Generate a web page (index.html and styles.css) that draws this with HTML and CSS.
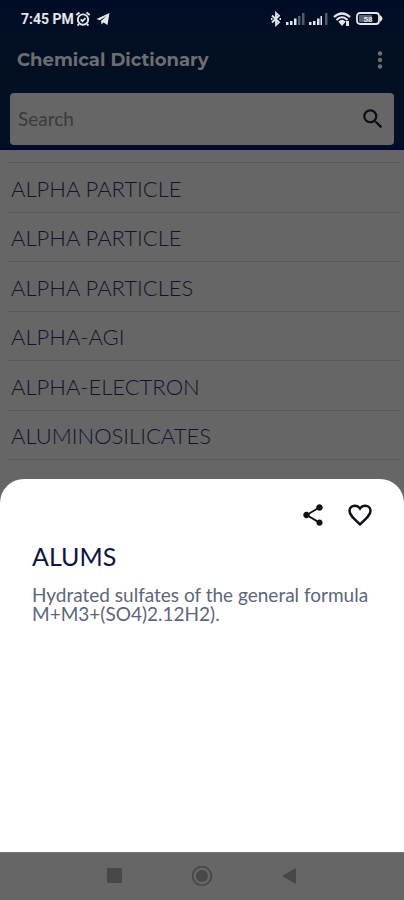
FILE: index.html
```html
<!DOCTYPE html>
<html lang="en">
<head>
<meta charset="utf-8">
<meta name="viewport" content="width=device-width, initial-scale=1">
<title>Chemical Dictionary</title>
<link rel="stylesheet" href="styles.css">
</head>
<body>
<div class="app">
  <header class="header">
    <div class="status">
      <div class="status-left">
        <span>7:45 PM</span>
        <svg width="16" height="16" viewBox="0 0 16 16" fill="none" stroke="currentColor" stroke-width="1.9" aria-hidden="true"><circle cx="8" cy="8.6" r="5.2"/><path d="M1.3 4 4.5 1.5M14.7 4l-3.2-2.500M3.900 13l-1.300 1.700M12.100 13l1.300 1.700M5.700 8.400l1.800 1.800 3-3"/></svg>
        <svg class="plane" width="14" height="14" viewBox="0 0 14 14" fill="currentColor" aria-hidden="true"><path d="M.5 7 13.500 1 11.500 13 7.500 10.500 5.500 12.500 5 9 10.500 4 3.800 8.300z"/></svg>
      </div>
      <div class="status-right">
        <svg width="12" height="16" viewBox="0 0 12 16" fill="none" stroke="currentColor" stroke-width="1.800" aria-hidden="true"><path d="M2 4.500 9 11.300 6 14V2l3 2.700L2 11.500M1 8h1.500M9.500 8H11"/></svg>
        <svg width="19" height="14" viewBox="0 0 19 14" fill="currentColor" aria-hidden="true"><path d="M0 10h2.500v3H0zM4 9h2.500v4H4zM8 6.500h2.500V13H8z"/><path opacity=".35" d="M12 4h2.500v9H12zM16 1h2.500v12H16z"/></svg>
        <svg width="19" height="14" viewBox="0 0 19 14" fill="currentColor" aria-hidden="true"><path d="M0 10h2.500v3H0zM4 9h2.500v4H4zM8 6.500h2.500V13H8z"/><path opacity=".35" d="M16 1h2.500v12H16z"/><path d="M11.500 4H13v9h-1.500z"/></svg>
        <svg width="20" height="16" viewBox="0 0 20 16" fill="none" stroke="currentColor" stroke-width="2.200" aria-hidden="true"><path d="M2 6Q10-1 18 6M4.500 9Q10 3.500 15.500 9M7 11.500q3-3 6 0"/><path fill="currentColor" stroke="none" d="m7.500 12 2.500-1.500L12.500 12 10 15zM14 10h3v5h-3z"/></svg>
        <svg class="battery" width="27" height="14" viewBox="0 0 27 14" aria-hidden="true"><rect x="1" y="1" width="22" height="11" rx="3" fill="none" stroke="currentColor" stroke-width="1.800"/><path d="M24 3q5 3.500 0 7z" fill="currentColor"/><rect x="3" y="3" width="13" height="7" rx="1" fill="currentColor" opacity=".4"/><text x="12" y="10" text-anchor="middle">58</text></svg>
      </div>
    </div>
    <div class="toolbar">
      <h1 class="title">Chemical Dictionary</h1>
      <button class="icon-button menu" aria-label="More options"><svg width="6" height="20" viewBox="0 0 6 20" fill="currentColor"><circle cx="3" cy="3.500" r="2.200"/><circle cx="3" cy="10" r="2.200"/><circle cx="3" cy="16.500" r="2.200"/></svg></button>
    </div>
    <form class="search">
      <input type="search" placeholder="Search" aria-label="Search">
      <button type="button" class="icon-button" aria-label="Find"><svg width="26" height="26" viewBox="0 0 24 24" fill="currentColor"><path d="M15.500 14h-.79l-.28-.27A6.470 6.470 0 0 0 16 9.500 6.500 6.500 0 1 0 9.500 16c1.610 0 3.090-.59 4.230-1.570l.27.28v.79l5 4.990L20.490 19zm-6 0C7.010 14 5 11.990 5 9.500S7.010 5 9.500 5 14 7.010 14 9.500 11.990 14 9.500 14z"/></svg></button>
    </form>
  </header>
  <main class="content">
    <ul class="terms">
      <li>ALPHA PARTICLE</li>
      <li>ALPHA PARTICLE</li>
      <li>ALPHA PARTICLES</li>
      <li>ALPHA-AGI</li>
      <li>ALPHA-ELECTRON</li>
      <li>ALUMINOSILICATES</li>
    </ul>
  </main>
  <section class="sheet" role="dialog" aria-labelledby="term">
    <div class="actions">
      <button class="icon-button" aria-label="Share"><svg width="26" height="26" viewBox="0 0 24 24" fill="currentColor"><path d="M18 16.080c-.76 0-1.440.3-1.960.77L8.910 12.700c.05-.23.09-.46.09-.7s-.04-.47-.09-.7l7.050-4.110c.54.5 1.250.81 2.040.81 1.660 0 3-1.340 3-3s-1.340-3-3-3-3 1.340-3 3c0 .24.04.47.09.7L8.040 9.810C7.500 9.310 6.790 9 6 9c-1.660 0-3 1.340-3 3s1.340 3 3 3c.79 0 1.500-.31 2.040-.81l7.120 4.160c-.05.21-.08.43-.08.65 0 1.610 1.310 2.920 2.920 2.920s2.920-1.310 2.920-2.920-1.310-2.920-2.920-2.920z"/></svg></button>
      <button class="icon-button" aria-label="Add to favourites"><svg width="28" height="28" viewBox="0 0 24 24" fill="none" stroke="currentColor" stroke-width="2.100"><path d="M12 20C6 14.600 3 11.800 3 8.500 3 5.900 5 4 7.500 4 9.300 4 11 4.900 12 6.400 13 4.900 14.700 4 16.500 4 19 4 21 5.900 21 8.500c0 3.300-3 6.100-9 11.500z"/></svg></button>
    </div>
    <h2 class="term" id="term">ALUMS</h2>
    <p class="definition">Hydrated sulfates of the general formula M+M3+(SO4)2.12H2).</p>
  </section>
  <nav class="navbar" aria-label="System">
    <button class="icon-button" aria-label="Recent apps"><svg width="22" height="22" viewBox="0 0 22 22" fill="currentColor"><rect x="4" y="2" width="15" height="15" rx="1"/></svg></button>
    <button class="icon-button" aria-label="Home"><svg width="22" height="22" viewBox="0 0 22 22" fill="currentColor"><circle cx="11" cy="10" r="9.300" fill="none" stroke="currentColor" stroke-width="1.800"/><circle cx="11" cy="10" r="6"/></svg></button>
    <button class="icon-button" aria-label="Back"><svg width="22" height="22" viewBox="0 0 22 22" fill="currentColor"><path d="M3 10 17 2v16z"/></svg></button>
  </nav>
</div>
</body>
</html>
```
FILE: styles.css
```css
* {
  box-sizing: border-box;
}

body {
  margin: 0;
  background: #666;
  font-family: Lato, "Liberation Sans", sans-serif;
}

h1, h2, p, ul {
  margin: 0;
  padding: 0;
}

svg {
  display: block;
}

.app {
  position: relative;
  display: flex;
  flex-direction: column;
  min-height: 100vh;
}

.header {
  padding: 8px 10px 3px;
  background: linear-gradient(#000c26, #031022 40%, #010e26);
  border-bottom: 2px solid #04043a;
}

.status {
  display: flex;
  justify-content: space-between;
  align-items: center;
  height: 22px;
  padding: 0 11px;
  color: #e4e6ea;
  font-family: Roboto, sans-serif;
  font-size: 14px;
  font-weight: 700;
}

.status-left, .status-right {
  display: flex;
  align-items: center;
  gap: 4px;
}

.status-left {
  gap: 1px;
}

.plane {
  margin-left: 4px;
}

.battery text {
  fill: currentColor;
  font-size: 8px;
}

.toolbar {
  display: flex;
  justify-content: space-between;
  align-items: center;
  height: 60px;
  padding: 0 11px 0 7px;
  color: #6c6e72;
}

.title {
  font-family: Montserrat, "Open Sans", sans-serif;
  font-size: 18px;
  font-weight: 700;
}

.icon-button {
  padding: 0;
  border: 0;
  background: none;
  color: inherit;
}

.search {
  display: flex;
  align-items: center;
  height: 52px;
  margin-top: 3px;
  padding: 0 8px;
  border-radius: 4px;
  background: #666;
  color: #0c0c18;
}

.search input {
  flex: 1;
  min-width: 0;
  padding: 0 0 2px;
  border: 0;
  outline: 0;
  background: none;
  font: 19px Lato, sans-serif;
}

.search input::placeholder {
  color: #3a3a3c;
}

.content {
  flex: 1;
  padding: 12px 4px 0 8px;
}

.terms {
  border-top: 1px solid #595959;
  list-style: none;
}

.terms li {
  display: flex;
  align-items: center;
  height: 50px;
  padding: 1px 3px 0;
  border-bottom: 1px solid #595959;
  color: #10152e;
  font-size: 22px;
  font-weight: 300;
}

.terms li:nth-child(even) {
  height: 49px;
}

.sheet {
  position: absolute;
  right: 0;
  bottom: 48px;
  left: 0;
  min-height: 373px;
  padding: 22px 30px;
  border-radius: 24px 24px 0 0;
  background: #fff;
}

.actions {
  display: flex;
  justify-content: flex-end;
  align-items: center;
  gap: 20px;
  color: #111118;
}

.term {
  margin-top: 12px;
  padding-left: 2px;
  color: #101440;
  font-size: 25px;
  font-weight: 400;
  line-height: 30px;
}

.definition {
  margin-top: 14px;
  padding-left: 2px;
  color: #5c6678;
  font-size: 19px;
  font-weight: 400;
  line-height: 19px;
}

.navbar {
  display: flex;
  justify-content: center;
  align-items: center;
  gap: 66px;
  height: 48px;
  border-top: 1px solid #777;
  background: #666;
  color: #484848;
}
```
